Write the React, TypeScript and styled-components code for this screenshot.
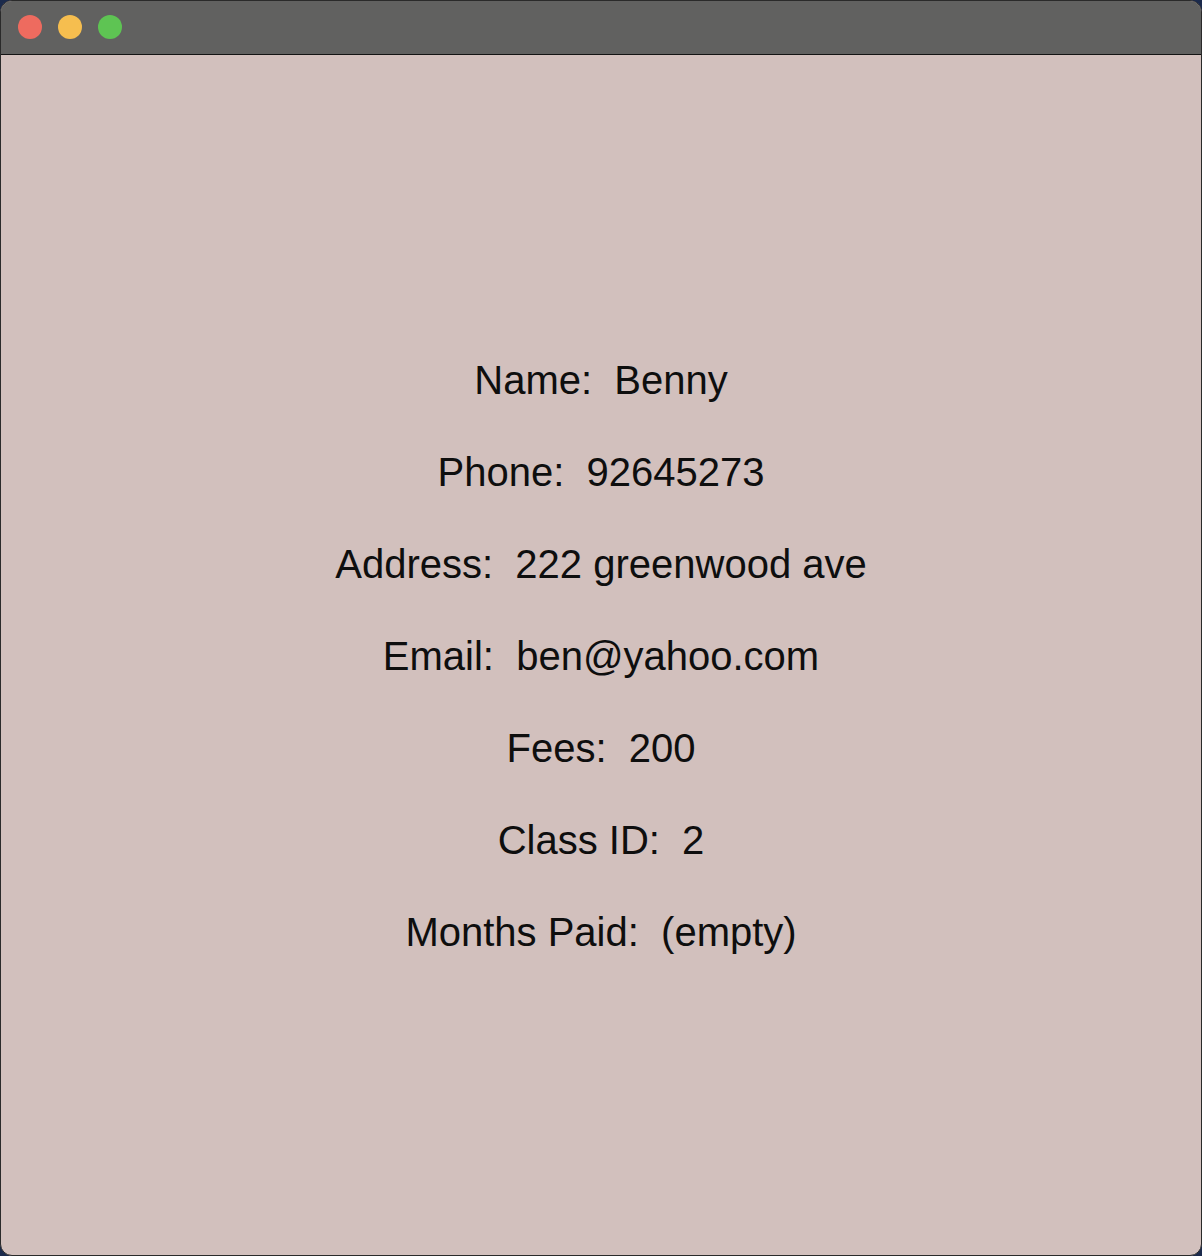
import React from "react";
import styled, { createGlobalStyle } from "styled-components";

const Global = createGlobalStyle`
  html, body { margin: 0; padding: 0; background: #1b2a4c; }
  #root { width: 1202px; height: 1256px; }
`;

const Window = styled.div`
  box-sizing: border-box;
  width: 1202px;
  height: 1256px;
  display: flex;
  flex-direction: column;
  border: 1px solid #2a2a2a;
  border-radius: 12px;
  overflow: hidden;
  background: #d2c0bd;
`;

const TitleBar = styled.div`
  box-sizing: border-box;
  height: 54px;
  flex: none;
  background: #616160;
  border-bottom: 1px solid #141414;
  display: flex;
  align-items: center;
  gap: 16px;
  padding-left: 17px;
  padding-bottom: 1px;
`;

const Light = styled.span<{ $color: string }>`
  width: 24px;
  height: 24px;
  border-radius: 50%;
  background: ${(p) => p.$color};
`;

const Content = styled.div`
  flex: 1;
  display: flex;
  flex-direction: column;
  justify-content: center;
  align-items: center;
  padding-top: 2px;
`;

const Row = styled.div`
  height: 92px;
  line-height: 92px;
  font-family: "Liberation Sans", Arial, sans-serif;
  font-size: 40px;
  color: #0e0e0e;
  white-space: pre;
  text-align: center;
`;

const rows: [string, string][] = [
  ["Name", "Benny"],
  ["Phone", "92645273"],
  ["Address", "222 greenwood ave"],
  ["Email", "ben@yahoo.com"],
  ["Fees", "200"],
  ["Class ID", "2"],
  ["Months Paid", "(empty)"],
];

export default function App() {
  return (
    <>
      <Global />
      <Window>
        <TitleBar>
          <Light $color="#ee6b5f" />
          <Light $color="#f6be4f" />
          <Light $color="#5ec453" />
        </TitleBar>
        <Content>
          {rows.map(([k, v]) => (
            <Row key={k}>{`${k}:  ${v}`}</Row>
          ))}
        </Content>
      </Window>
    </>
  );
}
